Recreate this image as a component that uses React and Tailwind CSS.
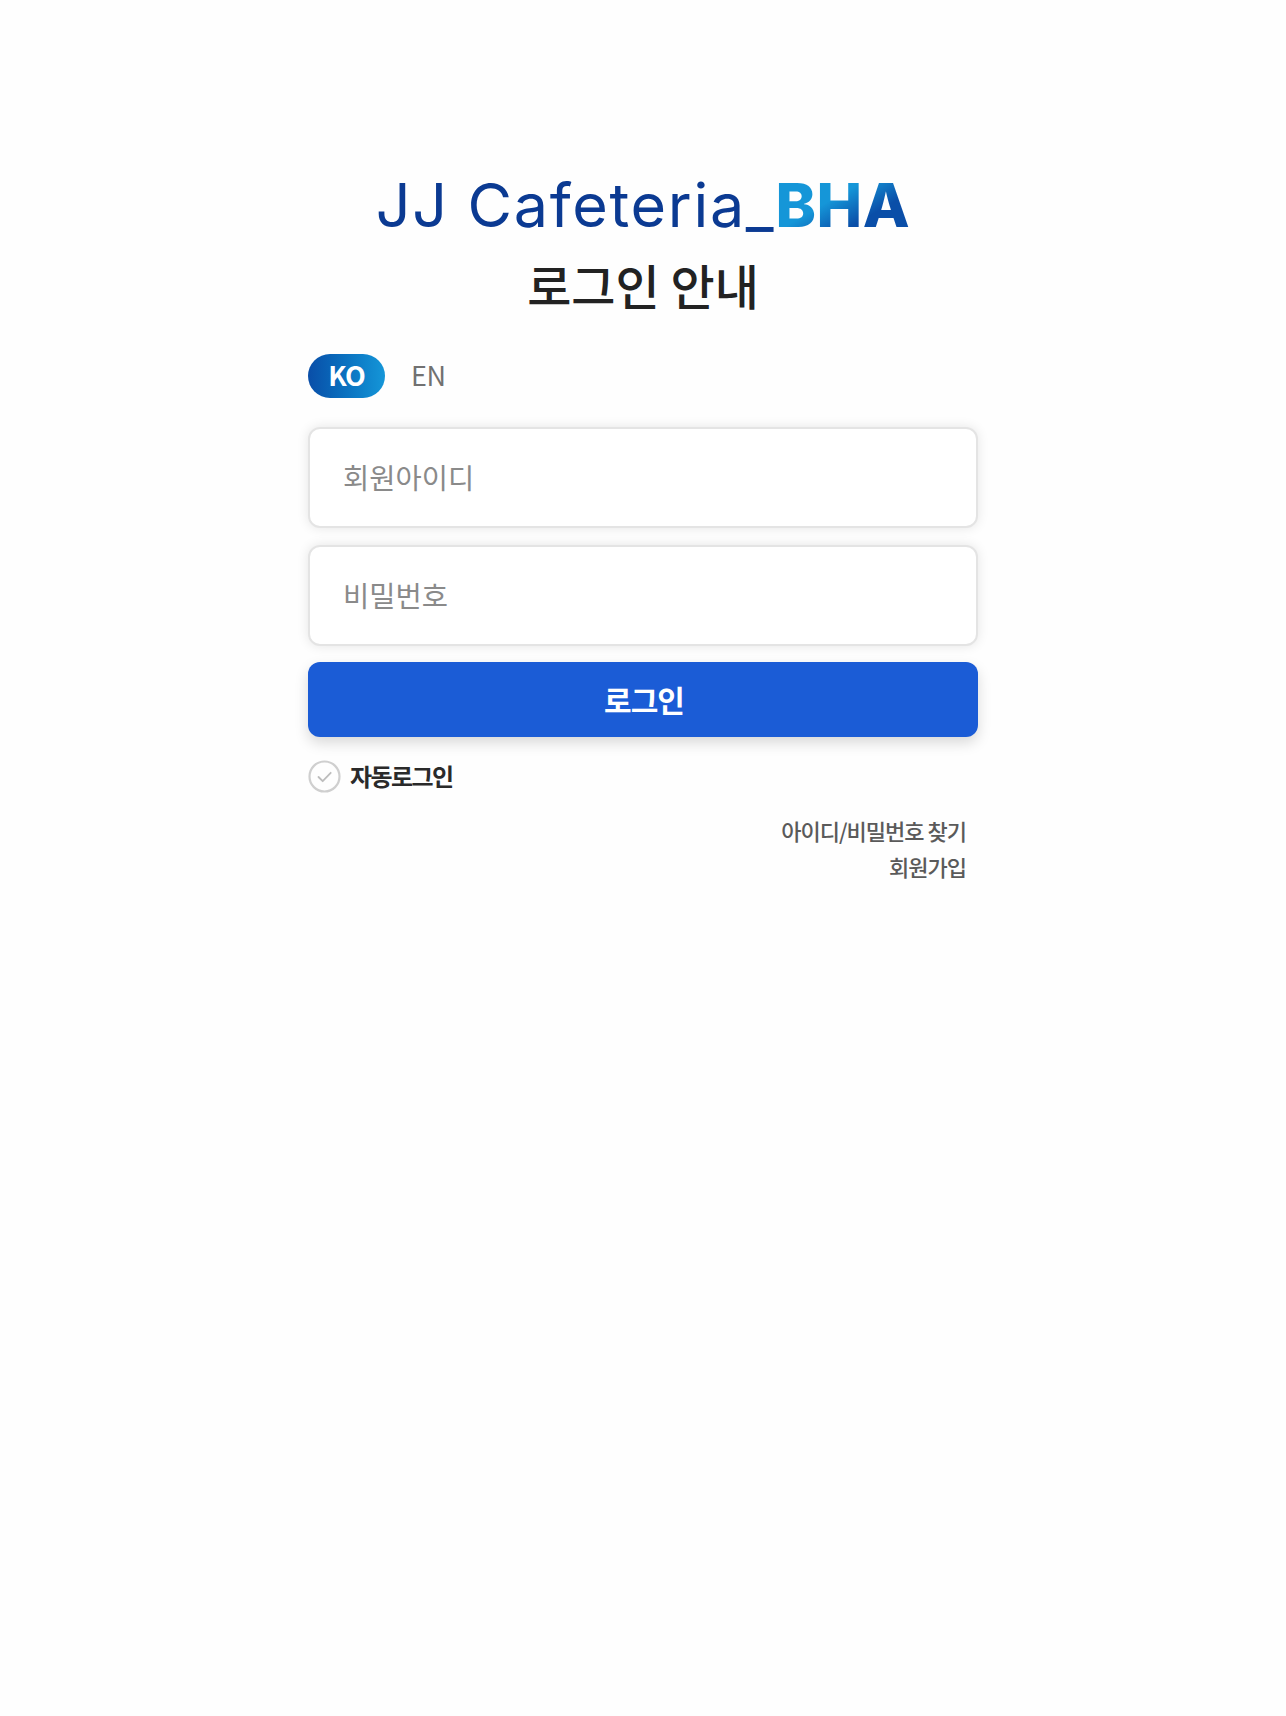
export default function App() {
  return (
    <div className="min-h-[1716px] bg-[#fefefe] font-['Noto_Sans_CJK_KR','Noto_Sans',sans-serif] flex flex-col items-center pt-[170px]">
      <div className="w-[670px] flex flex-col">
        <h1 className="flex justify-center items-baseline h-[70px] leading-[70px] whitespace-nowrap font-['Inter',sans-serif] text-[61px] text-[#0b3a92] font-normal">
          <span className="tracking-[1.7px]">JJ Cafeteria_</span>
          <span className="font-extrabold tracking-[0.6px] bg-[linear-gradient(150deg,#1596d8_42%,#0a4ea8_68%)] bg-clip-text text-transparent">BHA</span>
        </h1>
        <h2 className="mt-[9px] text-center text-[48px] leading-[70px] font-medium text-[#222222]">로그인 안내</h2>
        <div className="mt-[35px] flex items-center gap-[27px]">
          <span className="w-[77px] h-[44px] rounded-full bg-gradient-to-r from-[#0a4ea8] to-[#1596d8] text-white font-bold text-[27px] leading-[42px] pb-[2px] flex items-center justify-center tracking-[-1px]">KO</span>
          <span className="text-[27px] leading-[42px] pb-[2px] text-[#717171] tracking-[-0.5px] -ml-[1px]">EN</span>
        </div>
        <div className="mt-[29px] flex flex-col gap-[17px]">
          <div className="h-[101px] rounded-[12px] border-2 border-[#e4e4e4] bg-white shadow-[0_0_12px_rgba(0,0,0,0.1)] flex items-center pl-[33px] text-[28.5px] text-[#8a8a8a]">회원아이디</div>
          <div className="h-[101px] rounded-[12px] border-2 border-[#e4e4e4] bg-white shadow-[0_0_12px_rgba(0,0,0,0.1)] flex items-center pl-[33px] text-[28.5px] text-[#8a8a8a]">비밀번호</div>
        </div>
        <button className="mt-[16px] h-[75px] rounded-[12px] bg-[#1b5cd6] shadow-[0_6px_14px_rgba(0,0,0,0.15)] text-white text-[30px] font-bold tracking-[-1px] pl-[2px] pb-[1px]">로그인</button>
        <div className="mt-[21px] flex items-center gap-[9px]">
          <svg width="33" height="33" viewBox="0 0 33 33" fill="none">
            <circle cx="16.5" cy="16.5" r="15" stroke="#cfcfcf" strokeWidth="2.2" />
            <path d="M10.5 17l4.2 4.2 8-8.4" stroke="#bdbdbd" strokeWidth="1.8" strokeLinecap="round" strokeLinejoin="round" />
          </svg>
          <span className="text-[24px] font-bold text-[#2a2a2a] tracking-[-1.6px]">자동로그인</span>
        </div>
        <div className="mt-[18px] pr-[12px] flex flex-col items-end text-[22px] leading-[36px] font-medium text-[#5a5a5a] tracking-[-1px]">
          <span>아이디/비밀번호 찾기</span>
          <span>회원가입</span>
        </div>
      </div>
    </div>
  );
}
